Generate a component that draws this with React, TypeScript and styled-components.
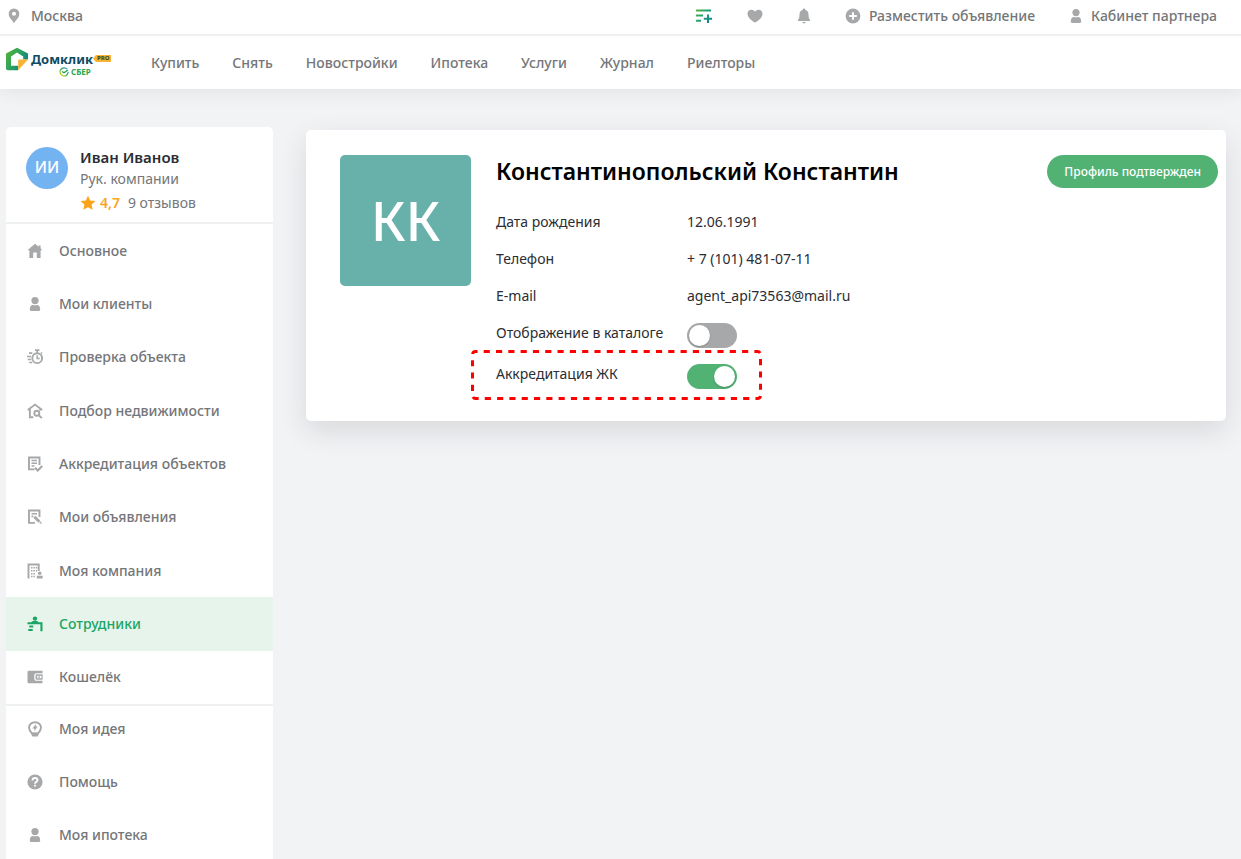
import React from "react";
import styled, { createGlobalStyle } from "styled-components";

const color = {
  page: "#f2f3f5",
  white: "#ffffff",
  line: "#eff0f0",
  muted: "#747679",
  icon: "#a6a8aa",
  ink: "#2b2d33",
  green: "#52b274",
  brand: "#1aa566",
  brandSoft: "#e6f4eb",
  orange: "#faa41c",
};

const GlobalStyle = createGlobalStyle`
  *, *::before, *::after { box-sizing: border-box; }
  body {
    margin: 0;
    background: ${color.page};
    color: ${color.ink};
    font-family: "Noto Sans", "Open Sans", sans-serif;
    font-size: 14px;
    line-height: 20px;
  }
  ul, dl, dd, h1, p { margin: 0; padding: 0; }
  ul { list-style: none; }
  a { color: inherit; text-decoration: none; }
  button { font: inherit; cursor: pointer; }
  svg { display: block; flex: none; }
`;

const Page = styled.div`
  min-height: 100vh;
  display: flex;
  flex-direction: column;
`;

const Header = styled.header`
  background: ${color.white};
  box-shadow: 0 3px 16px rgba(30, 34, 40, 0.08);
`;

const TopBar = styled.div`
  height: 36px;
  padding: 0 24px 2px 8px;
  border-bottom: 2px solid ${color.line};
  display: flex;
  align-items: center;
  justify-content: space-between;
  color: ${color.muted};
  font-weight: 500;
`;

const TopActions = styled.div`
  display: flex;
  align-items: center;
  gap: 34px;
`;

const City = styled.button`
  display: flex;
  align-items: center;
  gap: 11px;
  padding: 0;
  border: 0;
  background: none;
  color: inherit;
`;

const IconButton = styled.button`
  padding: 0;
  border: 0;
  background: none;
  color: ${color.icon};
`;

const TopLink = styled.a`
  display: flex;
  align-items: center;
  gap: 8px;
`;

const NavBar = styled.div`
  height: 53px;
  padding-left: 6px;
  display: flex;
  align-items: center;
`;

const Logo = styled.a`
  width: 145px;
  padding-bottom: 2px;
  display: flex;
  align-items: flex-start;
  gap: 3px;
`;

const LogoWords = styled.span`
  display: grid;
  grid-template-columns: auto auto;
  align-items: center;
  justify-content: start;
  padding-top: 4px;
`;

const LogoName = styled.span`
  color: #0d4b63;
  font-size: 13px;
  font-weight: 700;
  font-variant: small-caps;
  line-height: 16px;
`;

const LogoPro = styled.span`
  padding: 0 2px 0 4px;
  background: #f9b233;
  clip-path: polygon(0 50%, 3px 0, 100% 0, 100% 100%, 3px 100%);
  color: #3a4a3a;
  font-size: 6px;
  font-weight: 800;
  line-height: 7px;
`;

const LogoSber = styled.span`
  grid-column: 1 / -1;
  padding-left: 28px;
  display: flex;
  align-items: center;
  gap: 2px;
  color: #2fa84f;
  font-size: 8px;
  font-weight: 700;
  line-height: 10px;
`;

const MainNav = styled.nav`
  display: flex;
  gap: 33px;
  color: ${color.muted};
  font-weight: 500;
`;

const Body = styled.div`
  flex: 1;
  display: flex;
  align-items: stretch;
  gap: 33px;
  padding: 38px 15px 0 6px;
`;

const Sidebar = styled.aside`
  flex: 0 0 267px;
  background: ${color.white};
  border-radius: 5px 5px 0 0;
`;

const Person = styled.div`
  display: flex;
  gap: 12px;
  height: 97px;
  padding: 20px 20px 0;
  border-bottom: 2px solid ${color.line};
`;

const Initials = styled.div`
  width: 42px;
  height: 42px;
  border-radius: 50%;
  background: #73b3f2;
  color: ${color.white};
  font-size: 16px;
  font-weight: 500;
  line-height: 40px;
  text-align: center;
`;

const PersonName = styled.p`
  padding-bottom: 2px;
  font-size: 15px;
  font-weight: 600;
  line-height: 20px;
`;

const PersonRole = styled.p`
  color: ${color.muted};
`;

const Rating = styled.p`
  display: flex;
  align-items: center;
  gap: 4px;
  padding-top: 4px;
  color: ${color.muted};
`;

const Score = styled.strong`
  margin-right: 4px;
  color: ${color.orange};
  font-weight: 600;
`;

const Menu = styled.ul`
  display: grid;
  grid-auto-rows: 1fr;
  min-height: 480px;
`;

const ServiceMenu = styled.ul`
  display: grid;
  grid-auto-rows: 46px;
  gap: 7px;
  border-top: 2px solid ${color.line};
`;

const MenuLink = styled.a<{ $active?: boolean }>`
  height: 100%;
  display: flex;
  align-items: center;
  gap: 16px;
  padding-left: 21px;
  background: ${(p) => (p.$active ? color.brandSoft : "transparent")};
  color: ${(p) => (p.$active ? color.brand : color.muted)};
  font-weight: 500;

  svg {
    color: ${(p) => (p.$active ? color.brand : color.icon)};
  }
`;

const Main = styled.main`
  flex: 1;
  min-width: 0;
  padding-top: 3px;
`;

const Card = styled.section`
  display: flex;
  align-items: flex-start;
  gap: 25px;
  min-height: 291px;
  padding: 25px 8px 20px 34px;
  border-radius: 5px;
  background: ${color.white};
  box-shadow: 0 10px 28px rgba(30, 34, 40, 0.12);
`;

const Portrait = styled.div`
  flex: none;
  width: 131px;
  height: 131px;
  border-radius: 5px;
  background: #68b1aa;
  color: ${color.white};
  font-size: 54px;
  font-weight: 500;
  line-height: 131px;
  text-align: center;
`;

const Details = styled.div`
  flex: 1;
  min-width: 0;
`;

const FullName = styled.h1`
  color: #000;
  font-size: 23px;
  font-weight: 600;
  line-height: 32px;
`;

const Fields = styled.dl`
  padding-top: 17px;
`;

const Field = styled.div<{ $tall?: boolean }>`
  position: relative;
  display: grid;
  grid-template-columns: 191px 1fr;
  align-items: start;
  height: ${(p) => (p.$tall ? 41 : 37)}px;
  padding-top: 8px;
`;

const Marker = styled.svg`
  position: absolute;
  top: -6px;
  left: -25px;
  width: 291px;
  height: 50px;
  pointer-events: none;
`;

const Switch = styled.input`
  appearance: none;
  display: block;
  width: 50px;
  height: 25px;
  margin: 0;
  padding: 2px;
  border-radius: 13px;
  background: #a6a8aa;
  cursor: pointer;

  &::before {
    content: "";
    display: block;
    width: 21px;
    height: 21px;
    border-radius: 50%;
    background: ${color.white};
    box-shadow: 0 1px 2px rgba(0, 0, 0, 0.2);
  }
  &:checked {
    background: ${color.green};
  }
  &:checked::before {
    margin-left: 25px;
  }
`;

const Confirmed = styled.button`
  flex: none;
  height: 33px;
  padding: 0 17px;
  border: 0;
  border-radius: 17px;
  background: ${color.green};
  color: ${color.white};
  font-size: 12px;
  font-weight: 500;
`;

type IconProps = { children: React.ReactNode; size?: number };

const Icon = ({ children, size = 16 }: IconProps) => (
  <svg width={size} height={size} viewBox="0 0 16 16" fill="currentColor" aria-hidden="true">
    {children}
  </svg>
);

const line = { fill: "none", stroke: "currentColor", strokeWidth: 1.9 };

const UserShape = () => (
  <>
    <circle cx="8" cy="4.6" r="3.6" />
    <path d="M2.8 13.2c0-2.6 1.500-4.200 3-4.200.7 0 1.200.4 2.200.4S9.500 9 10.200 9c1.500 0 3 1.600 3 4.200 0 1.200-.5 1.800-1.600 1.800H4.400c-1.100 0-1.600-.6-1.600-1.800Z" />
  </>
);

const icons = {
  home: <path d="M8 .8.4 7.200h2V15h3.800V9.500h3.600V15h3.800V7.200h2L13.600 5.500V2.600h-2v1.200Z" />,
  user: <UserShape />,
  timer: (
    <>
      <circle cx="10.200" cy="9.200" r="4.900" {...line} />
      <path d="M10.200 6.200v3.200h2.500" {...line} strokeWidth={1.500} />
      <path d="M8 1.200h4.400M10.200 1.200V4M14 3.500l1 1M5.300 4.200H2M4 7.500H0M4 10.500H.8M5.300 13.500H2.200" {...line} strokeWidth={1.700} />
    </>
  ),
  search: (
    <>
      <path d="M.8 7 8 1.600 15.200 7M2.900 6v8.200h3.400M13.100 6v1.500" {...line} />
      <circle cx="9.800" cy="10.200" r="2.500" {...line} />
      <path d="m11.600 12 3.200 3.200" {...line} />
    </>
  ),
  docCheck: (
    <>
      <path d="M7.500 13.400H2V1.500h10.500V9" {...line} />
      <path d="M4.500 4.500H10M4.500 7.200H10M4.500 10H7.500" {...line} strokeWidth={1.500} />
      <path d="m8 11.800 2.700 2.700L15.200 10" {...line} strokeWidth={2.200} />
    </>
  ),
  docEdit: (
    <>
      <path d="M8 13.900H2V1.500h10.500V8" {...line} />
      <path d="M4.500 4.700H10M4.500 7.400h1.800" {...line} strokeWidth={1.600} />
      <path d="m7.400 7.800 5 5" {...line} strokeWidth={2.800} />
      <path d="m13.400 12.300 1.800 2.700-2.900-.9Z" />
    </>
  ),
  company: (
    <>
      <path d="M1.500 15.500V1.500h10.200V8" {...line} />
      <path d="M4 4h1.500v1.500H4ZM6.400 4h1.500v1.500H6.400ZM8.800 4h1.500v1.500H8.800ZM4 7h1.500v1.500H4ZM6.400 7h1.500v1.500H6.400ZM8.800 7h1.200v1.500H8.800ZM4 10h1.500v1.500H4ZM6.400 10h1.500v1.500H6.400ZM4 12.800h1.500v1.500H4ZM6.400 12.800h1.500v1.500H6.400Z" />
      <circle cx="12.700" cy="10.200" r="1.800" />
      <path d="M9.800 12.700h5.900v2.800H9.800Z" />
    </>
  ),
  staff: (
    <>
      <circle cx="8" cy="2.600" r="2.200" />
      <path d="M4.300 6.300c.4-1 1.500-1.400 3.700-1.400s3.300.4 3.700 1.400h3.800v9h-2.100V8.300H.5v-2ZM2.300 9.400h4v2h-4ZM1.300 12.900h4.400v2H1.300Z" />
    </>
  ),
  wallet: (
    <>
      <path d="M2 1.800h13.500v2.400H9.500C8 4.200 7.300 5 7.300 6.500v3c0 1.500.7 2.300 2.200 2.300h6v2.400H2c-1 0-1.500-.5-1.500-1.500V3.300c0-1 .5-1.500 1.500-1.500Z" />
      <path d="M10 5.300h5.600v5.400H10c-.9 0-1.400-.4-1.400-1.300V6.600c0-.9.5-1.300 1.400-1.300Zm.2 1.400v2.600h4.200V6.700Z" fillRule="evenodd" />
      <path d="M11.300 7.200h1.600v1.600h-1.600Z" />
    </>
  ),
  idea: (
    <>
      <path d="M5 12.400C3.500 10.800 2 9 2 6.500a6 5.300 0 0 1 12 0c0 2.500-1.500 4.300-3 5.900Z" {...line} />
      <path d="M4.400 11.800h7.200v1.900l-1 1.900H5.400l-1-1.900ZM8.900 2.900 5.400 7.400h2V10.200l3.300-4.600H8.800Z" />
    </>
  ),
  help: (
    <>
      <circle cx="8" cy="8" r="7.600" />
      <path d="M5.500 6.400c0-1.500 1-2.400 2.500-2.400s2.500.8 2.500 2.100C10.500 8 8 7.900 8 9.700M8 10.700v1.800" fill="none" stroke="#fff" strokeWidth="1.900" />
    </>
  ),
};

const Marks = {
  pin: (
    <svg width="12" height="16" viewBox="0 0 12 16" fill={color.icon} aria-hidden="true">
      <path fillRule="evenodd" d="M6 .5A5.300 5.300 0 0 1 11.300 6C11.300 9.500 8 12 6 15 4 12 .7 9.500.7 6A5.300 5.300 0 0 1 6 .5Zm0 3.300a2 2 0 1 0 0 4 2 2 0 0 0 0-4Z" />
    </svg>
  ),
  listPlus: (
    <svg width="18" height="16" viewBox="0 0 18 16" fill="none" strokeWidth="2" aria-hidden="true">
      <defs>
        <linearGradient id="list-plus" gradientUnits="userSpaceOnUse" x1="0" y1="2" x2="17" y2="14">
          <stop offset="0" stopColor="#5fb336" />
          <stop offset=".5" stopColor="#1fa073" />
          <stop offset="1" stopColor="#0a7f9c" />
        </linearGradient>
      </defs>
      <path stroke="url(#list-plus)" d="M1 2.500h15M1 7.500h7M1 12.800h5M13 6.500v8.500M8.800 10.700H17" />
    </svg>
  ),
  heart: (
    <svg width="16" height="14" viewBox="0 0 16 14" fill="currentColor" aria-hidden="true">
      <path d="M8 13.500C7 13.300.5 9.200.5 4.700.5 2.300 2.300.7 4.400.7 6 .7 7.200 1.500 8 2.800 8.800 1.500 10 .7 11.600.7c2.100 0 3.900 1.600 3.900 4 0 4.500-6.500 8.600-7.500 8.800Z" />
    </svg>
  ),
  bell: (
    <svg width="14" height="16" viewBox="0 0 14 16" fill="currentColor" aria-hidden="true">
      <path d="M7 .5c.8 0 1.200.5 1.200 1.200 2.200.6 3.300 2.300 3.300 4.800 0 3.200.5 4.300 1.500 5.200v1.200H1v-1.200c1-.9 1.500-2 1.500-5.200 0-2.500 1.100-4.200 3.300-4.800C5.800 1 6.200.5 7 .5ZM5.200 14h3.600c-.3 1-1 1.400-1.800 1.400S5.500 15 5.200 14Z" />
    </svg>
  ),
  plus: (
    <Icon>
      <circle cx="8" cy="8" r="7.400" fill={color.icon} />
      <path d="M8 4.200v7.600M4.200 8h7.600" stroke="#fff" strokeWidth="2" />
    </Icon>
  ),
  user: (
    <svg width="14" height="16" viewBox="1 0 14 16" fill={color.icon} aria-hidden="true">
      <UserShape />
    </svg>
  ),
  star: (
    <svg width="16" height="16" viewBox="0 0 16 16" fill={color.orange} aria-hidden="true">
      <path d="m8 .8 2.200 4.700 5.300.6-3.900 3.500 1 5.200L8 12.200l-4.600 2.600 1-5.200L.5 6.100l5.300-.6Z" />
    </svg>
  ),
  house: (
    <svg width="22" height="25" viewBox="0 0 22 25" aria-hidden="true">
      <defs>
        <linearGradient id="house" x1="0" y1="0" x2="1" y2=".6">
          <stop offset="0" stopColor="#5cb531" />
          <stop offset=".6" stopColor="#26a063" />
          <stop offset="1" stopColor="#0f7f86" />
        </linearGradient>
      </defs>
      <path fill="url(#house)" fillRule="evenodd" d="M11 .8 22 6.500v6H17.200V9.500L11 5.500 5 9.500v9.300h7.500L12 23.200H2c-1.300 0-2-.7-2-2v-14.700Z" />
      <path fill="#f9b233" d="M13.500 12.500H22L12.200 23.200v-9.300c0-.9.4-1.400 1.300-1.400Z" />
    </svg>
  ),
  sber: (
    <svg width="10" height="10" viewBox="0 0 10 10" fill="none" aria-hidden="true">
      <defs>
        <linearGradient id="sber" x1="0" y1="1" x2="1" y2="0">
          <stop offset="0" stopColor="#e6e600" />
          <stop offset=".5" stopColor="#2fa84f" />
          <stop offset="1" stopColor="#1a8ad6" />
        </linearGradient>
      </defs>
      <path d="M8.200 2.200A4.100 4.100 0 1 0 9.200 5" stroke="url(#sber)" strokeWidth="1.200" />
      <path d="m3 4.500 2 1.300L9 3" stroke="#21a049" strokeWidth="1.300" />
    </svg>
  ),
};

const sections = ["Купить", "Снять", "Новостройки", "Ипотека", "Услуги", "Журнал", "Риелторы"];

type MenuEntry = { label: string; icon: keyof typeof icons; active?: boolean };

const menu: MenuEntry[] = [
  { label: "Основное", icon: "home" },
  { label: "Мои клиенты", icon: "user" },
  { label: "Проверка объекта", icon: "timer" },
  { label: "Подбор недвижимости", icon: "search" },
  { label: "Аккредитация объектов", icon: "docCheck" },
  { label: "Мои объявления", icon: "docEdit" },
  { label: "Моя компания", icon: "company" },
  { label: "Сотрудники", icon: "staff", active: true },
  { label: "Кошелёк", icon: "wallet" },
];

const serviceMenu: MenuEntry[] = [
  { label: "Моя идея", icon: "idea" },
  { label: "Помощь", icon: "help" },
  { label: "Моя ипотека", icon: "user" },
];

const facts = [
  ["Дата рождения", "12.06.1991"],
  ["Телефон", "+ 7 (101) 481-07-11"],
  ["E-mail", "agent_api73563@mail.ru"],
];

const MenuItem = ({ label, icon, active }: MenuEntry) => (
  <li>
    <MenuLink href="#" $active={active} aria-current={active ? "page" : undefined}>
      <Icon>{icons[icon]}</Icon>
      {label}
    </MenuLink>
  </li>
);

export default function App() {
  return (
    <Page>
      <GlobalStyle />
      <Header>
        <TopBar>
          <City type="button">
            {Marks.pin}
            Москва
          </City>
          <TopActions>
            <IconButton type="button" aria-label="Сравнение">{Marks.listPlus}</IconButton>
            <IconButton type="button" aria-label="Избранное">{Marks.heart}</IconButton>
            <IconButton type="button" aria-label="Уведомления">{Marks.bell}</IconButton>
            <TopLink href="#">
              {Marks.plus}
              Разместить объявление
            </TopLink>
            <TopLink href="#">
              {Marks.user}
              Кабинет партнера
            </TopLink>
          </TopActions>
        </TopBar>
        <NavBar>
          <Logo href="#">
            {Marks.house}
            <LogoWords>
              <LogoName>Домклик</LogoName>
              <LogoPro>PRO</LogoPro>
              <LogoSber>
                {Marks.sber}
                СБЕР
              </LogoSber>
            </LogoWords>
          </Logo>
          <MainNav>
            {sections.map((name) => (
              <a href="#" key={name}>{name}</a>
            ))}
          </MainNav>
        </NavBar>
      </Header>
      <Body>
        <Sidebar>
          <Person>
            <Initials>ИИ</Initials>
            <div>
              <PersonName>Иван Иванов</PersonName>
              <PersonRole>Рук. компании</PersonRole>
              <Rating>
                {Marks.star}
                <Score>4,7</Score>
                9 отзывов
              </Rating>
            </div>
          </Person>
          <Menu>
            {menu.map((entry) => (
              <MenuItem key={entry.label} {...entry} />
            ))}
          </Menu>
          <ServiceMenu>
            {serviceMenu.map((entry) => (
              <MenuItem key={entry.label} {...entry} />
            ))}
          </ServiceMenu>
        </Sidebar>
        <Main>
          <Card>
            <Portrait>КК</Portrait>
            <Details>
              <FullName>Константинопольский Константин</FullName>
              <Fields>
                {facts.map(([term, value]) => (
                  <Field key={term}>
                    <dt>{term}</dt>
                    <dd>{value}</dd>
                  </Field>
                ))}
                <Field $tall>
                  <dt><label htmlFor="catalog">Отображение в каталоге</label></dt>
                  <dd><Switch id="catalog" type="checkbox" /></dd>
                </Field>
                <Field $tall>
                  <dt><label htmlFor="accreditation">Аккредитация ЖК</label></dt>
                  <dd><Switch id="accreditation" type="checkbox" defaultChecked /></dd>
                  <Marker viewBox="0 0 291 50" aria-hidden="true">
                    <rect x="1.5" y="1.5" width="288" height="47" rx="3" fill="none" stroke="#ff0000" strokeWidth="3" pathLength="648" strokeDasharray="6 6" strokeDashoffset="4" />
                  </Marker>
                </Field>
              </Fields>
            </Details>
            <Confirmed type="button">Профиль подтвержден</Confirmed>
          </Card>
        </Main>
      </Body>
    </Page>
  );
}
